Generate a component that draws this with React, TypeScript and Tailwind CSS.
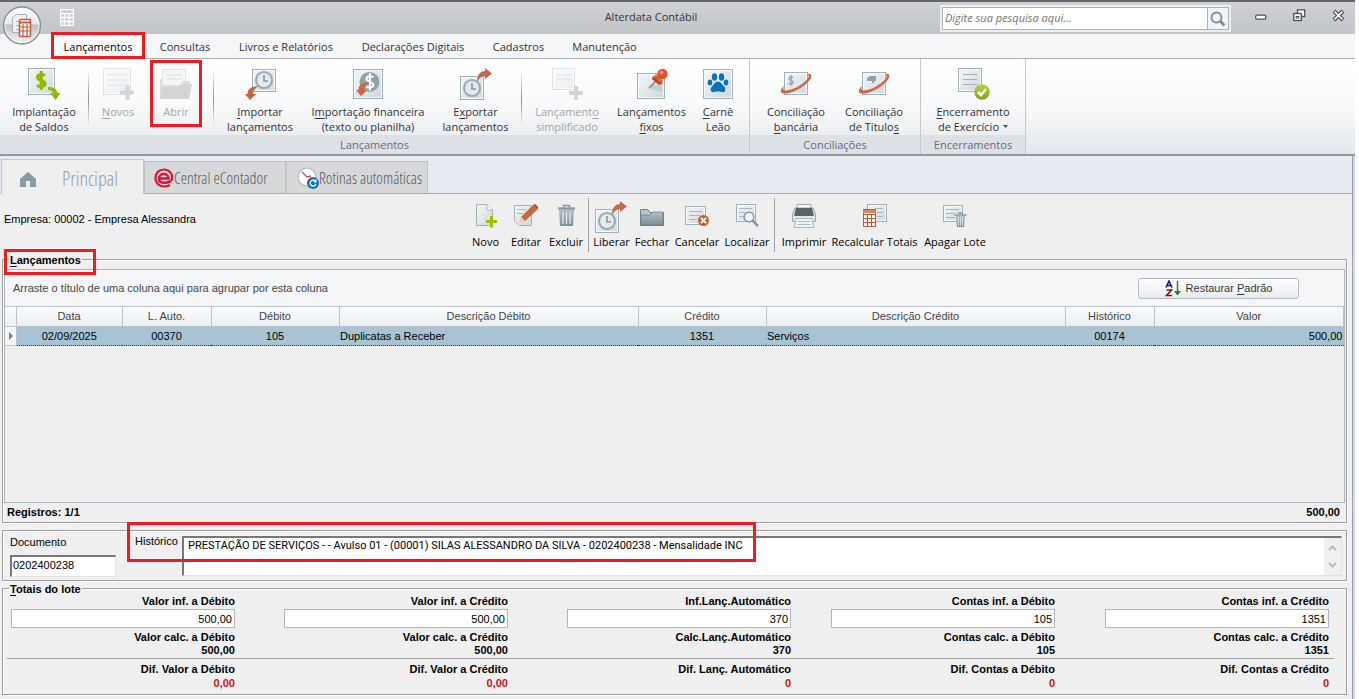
import React from "react";

type IconProps = { children: React.ReactNode; w?: number; h?: number };

function Svg({ children, w = 40, h = 34 }: IconProps) {
  return (
    <svg width={w} height={h} viewBox={`0 0 ${w} ${h}`} fill="none" aria-hidden="true" className="shrink-0">
      {children}
    </svg>
  );
}

function Sheet({ x, y, w, h }: { x: number; y: number; w: number; h: number }) {
  return (
    <g>
      <rect x={x + 0.5} y={y + 0.5} width={w - 1} height={h - 1} fill="url(#sheet)" stroke="#9fb0b9" />
      <rect x={x + 1.5} y={y + 1.5} width={w - 3} height={h - 3} stroke="#f7fafb" />
    </g>
  );
}

function Clock({ cx, cy }: { cx: number; cy: number }) {
  return (
    <g>
      <circle cx={cx} cy={cy} r="8" fill="#e4eaed" stroke="#9aabb4" strokeWidth="2.2" />
      <path d={`M${cx} ${cy - 5}V${cy + 1}H${cx + 4}`} stroke="#8799a2" strokeWidth="1.6" />
    </g>
  );
}

const OutArrow = ({ x, y }: { x: number; y: number }) => (
  <path transform={`translate(${x} ${y})`} d="M0 14C0 7 3 3 8 3V0L15 5.500L8 11V8C5 8 2 10 0 14Z" fill="#c9694a" />
);
const InArrow = ({ x, y }: { x: number; y: number }) => (
  <path transform={`translate(${x} ${y})`} d="M14 0C6 .5 2.500 3 2.500 8H0L5 14L11 8H8C8 5 10 2 14 0Z" fill="#cc6440" />
);
const Ring = () => (
  <path d="M31 7C37 6 37 11 30 17C21 25 7 29 5 25C4 23 6 21 8 19C7 22 7 23 9 23.500C14 24 23 20 29 14.500C33 11 34 8 31 7Z" fill="#cb6646" />
);
const Dollar = ({ x, y, s, c, sw }: { x: number; y: number; s: number; c: string; sw: number }) => (
  <path
    transform={`translate(${x} ${y}) scale(${s})`}
    d="M8.500 4.500C7 3 1.500 2.500 1.500 6C1.500 9.500 8.500 8.500 8.500 12C8.500 15.500 3 15.500 1 13.500M5 0V18"
    stroke={c}
    strokeWidth={sw}
  />
);

function Defs() {
  return (
    <svg width="0" height="0" className="absolute" aria-hidden="true">
      <defs>
        <linearGradient id="sheet" x1="0" y1="0" x2="1" y2="1">
          <stop offset="0" stopColor="#f4f7f8" />
          <stop offset="1" stopColor="#cfd8dc" />
        </linearGradient>
        <linearGradient id="steel" x1="0" y1="0" x2="0" y2="1">
          <stop offset="0" stopColor="#b4c2c8" />
          <stop offset="1" stopColor="#7b8e96" />
        </linearGradient>
        <linearGradient id="orb" x1="0" y1="0" x2="0" y2="1">
          <stop offset="0" stopColor="#ffffff" />
          <stop offset=".45" stopColor="#e6e7e9" />
          <stop offset=".5" stopColor="#bfc1c4" />
          <stop offset="1" stopColor="#f4f5f6" />
        </linearGradient>
        <linearGradient id="lime" x1="0" y1="0" x2="0" y2="1">
          <stop offset="0" stopColor="#b9d23c" />
          <stop offset="1" stopColor="#82a012" />
        </linearGradient>
      </defs>
    </svg>
  );
}

/* Ribbon drawings */
const IcBalance = (
  <Svg>
    <Sheet x={4} y={1} w={27} h={27} />
    <Dollar x={12} y={4} s={1.05} c="#94b800" sw={3} />
    <path d="M24 20C30 20 33 22 33.500 26H36.500L31.500 33L26 26H29C28.500 24 27 23 24 23.500Z" fill="#94b800" />
  </Svg>
);
const IcNew = (
  <Svg>
    <g opacity=".3">
      <Sheet x={5} y={1} w={28} h={27} />
      <path d="M9 8H29M9 13H29M9 18H29" stroke="#9fb0b9" />
    </g>
    <path d="M29.500 18.500V33M22 25.500H36" stroke="#d3d5d7" strokeWidth="4" />
  </Svg>
);
const IcOpen = (
  <Svg>
    <path d="M6.500 2.500H29.500V22H6.500Z" fill="#f5f5f5" stroke="#e2e3e4" />
    <path d="M10 8H26M10 12H26" stroke="#dcdedf" />
    <path d="M4 32V12H7V18H24L27 14H34V18Z" fill="#dcdddd" />
    <path d="M4 32L7 20H23L26 17H36L33 32Z" fill="#d2d4d5" />
  </Svg>
);
const IcImport = (
  <Svg>
    <Sheet x={12} y={2} w={24} h={23} />
    <Clock cx={24} cy={13} />
    <InArrow x={5} y={19} />
  </Svg>
);
const IcImportFin = (
  <Svg>
    <Sheet x={5} y={2} w={30} h={30} />
    <circle cx="21.500" cy="15" r="10" fill="#8fa1ab" />
    <Dollar x={17} y={6} s={0.98} c="#fff" sw={2} />
    <InArrow x={8} y={15} />
  </Svg>
);
const IcExport = (
  <Svg>
    <Sheet x={4} y={9} w={24} h={24} />
    <Clock cx={16} cy={21} />
    <OutArrow x={21} y={1} />
  </Svg>
);
const IcSimple = (
  <Svg>
    <g opacity=".35">
      <Sheet x={5} y={1} w={23} h={22} />
      <path d="M9 8H24M9 12H24" stroke="#9fb0b9" />
    </g>
    <path d="M29 19V33M22 26H36" stroke="#d0d2d4" strokeWidth="4" />
  </Svg>
);
const IcPin = (
  <Svg>
    <Sheet x={5} y={6} w={28} h={26} />
    <path d="M21 18L30 17V25L18 22Z" fill="#c3ccd1" />
    <path d="M17 21L24 14" stroke="#8b9aa2" strokeWidth="2" />
    <path d="M21 9L31 16L27 18L20 12Z" fill="#b8411d" />
    <path d="M24 7L31 14L28 16L22 10Z" fill="#dc6238" />
    <circle cx="30.500" cy="7" r="5.200" fill="#d9532a" />
    <circle cx="29.500" cy="5.500" r="2" fill="#ee8c68" />
  </Svg>
);
const IcPaw = (
  <Svg>
    <Sheet x={5} y={2} w={30} h={30} />
    <g fill="#0a72b0">
      <ellipse cx="16.500" cy="10" rx="2.700" ry="3.700" />
      <ellipse cx="23.500" cy="10" rx="2.700" ry="3.700" />
      <ellipse cx="12" cy="15.500" rx="2.300" ry="3" />
      <ellipse cx="28" cy="15.500" rx="2.300" ry="3" />
      <path d="M20 14.500C23 14.500 24.500 18 26.500 20C28.500 22.500 27 26 23.500 25C21 24.400 19 24.400 16.500 25C13 26 11.500 22.500 13.500 20C15.500 18 17 14.500 20 14.500Z" />
    </g>
  </Svg>
);
const IcBank = (
  <Svg>
    <Sheet x={8} y={5} w={24} h={23} />
    <Dollar x={12} y={8} s={0.6} c="#9aa9b1" sw={2.6} />
    <Ring />
  </Svg>
);
const IcTitle = (
  <Svg>
    <Sheet x={8} y={5} w={24} h={23} />
    <path d="M13 11L16 9H22V14H20V16H18V14H13Z" fill="#8ea0aa" />
    <Ring />
  </Svg>
);
const IcClose = (
  <Svg>
    <Sheet x={5} y={1} w={24} h={24} />
    <path d="M10 7.500H24M10 12.500H24M10 17.500H24" stroke="#a3b2ba" />
    <circle cx="29" cy="25" r="7.700" fill="url(#lime)" />
    <path d="M25 25L28 28L33 22" stroke="#fff" strokeWidth="2.600" />
  </Svg>
);

/* Toolbar drawings */
const TbNew = (
  <Svg w={34} h={32}>
    <path d="M7.500 6.500H18L23.500 12V27.500H7.500Z" fill="url(#sheet)" stroke="#a3b2ba" />
    <path d="M18 6.500V12H23.500" fill="#fff" stroke="#a3b2ba" />
    <path d="M22.500 18V29.500M17 23.500H28" stroke="#9cbf00" strokeWidth="3" />
  </Svg>
);
const TbEdit = (
  <Svg w={34} h={32}>
    <path d="M5.500 7.500H22.500V27.500H10L5.500 23Z" fill="url(#sheet)" stroke="#a3b2ba" />
    <path d="M8 11.500H17M8 15.500H14" stroke="#a9b7be" />
    <path d="M12 19L24 7L29 11L16 23Z" fill="#c9663f" />
    <path d="M12 19L16 23L10 25Z" fill="#e8c9a8" />
    <path d="M24 7L26 6L29 9L29 11Z" fill="#8b4a33" />
  </Svg>
);
const TbTrash = (
  <Svg w={34} h={32}>
    <path d="M10 12H25L24 28H11Z" fill="url(#steel)" />
    <path d="M14 14V26M17.500 14V26M21 14V26" stroke="#e6ebed" strokeWidth="1.200" />
    <path d="M9 10.500H26" stroke="#8799a1" strokeWidth="2.400" />
    <path d="M14.500 9.500V7.500H20.500V9.500" stroke="#8799a1" strokeWidth="1.500" />
  </Svg>
);
const TbRelease = (
  <Svg w={34} h={36}>
    <Sheet x={0} y={11} w={24} h={24} />
    <Clock cx={12} cy={23} />
    <OutArrow x={17} y={3} />
  </Svg>
);
const TbFolder = (
  <Svg w={34} h={32}>
    <path d="M5.500 27.500V11.500H13L15 14.500H28.500V27.500Z" fill="#b8c4c9" stroke="#6f8088" />
    <path d="M6 27V17H15L18 14H28V27Z" fill="url(#steel)" stroke="#6f8088" strokeWidth=".8" />
  </Svg>
);
const TbCancel = (
  <Svg w={34} h={32}>
    <Sheet x={5} y={8} w={21} h={19} />
    <path d="M9 13.500H22M9 17.500H20M9 21.500H17" stroke="#a9b7be" />
    <circle cx="23.500" cy="22.500" r="5.500" fill="#cf5c33" />
    <path d="M21 20L26 25M26 20L21 25" stroke="#fff" strokeWidth="1.800" />
  </Svg>
);
const TbFind = (
  <Svg w={34} h={32}>
    <Sheet x={6} y={6} w={20} h={18} />
    <path d="M9 10.500H22M9 14.500H15M9 18.500H14" stroke="#a9b7be" />
    <circle cx="19" cy="19" r="4.800" fill="#f1f5f6" stroke="#8799a1" strokeWidth="1.600" />
    <path d="M22.500 22.500L28 28" stroke="#7c8e96" strokeWidth="2.400" />
  </Svg>
);
const TbPrint = (
  <Svg w={34} h={32}>
    <path d="M10 6.500H24V12H10Z" fill="#fbfcfc" stroke="#97a7ae" />
    <path d="M8 10H26L28.500 16V23.500H5.500V16Z" fill="#dfe5e7" stroke="#97a7ae" />
    <path d="M9 10H25L27 18H7Z" fill="#5c6468" />
    <path d="M9.500 20.500H24.500L27 29.500H7Z" fill="#eef4f5" stroke="#a3b8bd" />
    <path d="M11 23.500H23M10 26.500H24" stroke="#a9bcc1" />
  </Svg>
);
const TbCalc = (
  <Svg w={34} h={32}>
    <Sheet x={9} y={6} w={20} h={18} />
    <path d="M17 10.500H25M19 14.500H25M19 18.500H25" stroke="#a9b7be" />
    <rect x="5.500" y="11.500" width="12" height="17" fill="#fff" stroke="#c05a37" />
    <path d="M5 12H18V15H5Z" fill="#d58465" />
    <path d="M6 16.500H17M6 20.500H17M6 24.500H17M9.500 16V28M13.500 16V28" stroke="#c05a37" />
  </Svg>
);
const TbErase = (
  <Svg w={34} h={32}>
    <Sheet x={5} y={7} w={20} h={17} />
    <path d="M8 11.500H21M8 15.500H17M8 19.500H17" stroke="#a9b7be" />
    <path d="M18 18H27L26 29H19Z" fill="url(#steel)" />
    <path d="M20.500 19V28M22.500 19V28M24.500 19V28" stroke="#e6ebed" strokeWidth=".8" />
    <path d="M16.500 17H28.500M20 15H25" stroke="#8799a1" strokeWidth="1.600" />
  </Svg>
);

function Mark({ className }: { className: string }) {
  return <span aria-hidden="true" className={`pointer-events-none absolute z-20 border-3 border-[#ed1c24] ${className}`} />;
}

const U = ({ children }: { children: React.ReactNode }) => <span className="underline underline-offset-2">{children}</span>;

function Big({ icon, w, l1, l2, off, children }: { icon: React.ReactNode; w: string; l1: React.ReactNode; l2?: React.ReactNode; off?: boolean; children?: React.ReactNode }) {
  return (
    <button type="button" className={`relative flex shrink-0 flex-col items-center pt-2 text-[11px] leading-[15px] whitespace-nowrap ${w} ${off ? "text-[#a2a4a7]" : "text-[#2f3338]"}`}>
      {icon}
      <span className="mt-[3px]">{l1}</span>
      {l2 && <span>{l2}</span>}
      {children}
    </button>
  );
}

const Sep = () => <span className="mt-3 h-14 w-px shrink-0 bg-linear-to-b from-[#f4f4f5] via-[#8f9296] to-[#f4f4f5]" />;

function Group({ w, title, children }: { w: string; title: string; children: React.ReactNode }) {
  return (
    <section className={`flex shrink-0 flex-col border-r border-[#c4c8cc] ${w}`}>
      <div className="flex flex-1">{children}</div>
      <h2 className="h-[19px] bg-[#dde1e5] text-center text-[11px] leading-5 text-[#666b7d]">{title}</h2>
    </section>
  );
}

function Tool({ icon, w, label }: { icon: React.ReactNode; w: string; label: string }) {
  return (
    <button type="button" className={`flex h-[52px] shrink-0 flex-col items-center justify-between text-[11px] leading-4 whitespace-nowrap text-black ${w}`}>
      {icon}
      <span>{label}</span>
    </button>
  );
}

const ToolSep = () => <span className="mx-[2px] h-[54px] w-px shrink-0 bg-[#a0a0a0]" />;

const menu = [
  { label: "Consultas", w: "w-20" },
  { label: "Livros e Relatórios", w: "w-[122px]" },
  { label: "Declarações Digitais", w: "w-[132px]" },
  { label: "Cadastros", w: "w-[79px]" },
  { label: "Manutenção", w: "w-[93px]" },
];

const columns = [
  { name: "Data", value: "02/09/2025", align: "text-center", w: "w-[106px]" },
  { name: "L. Auto.", value: "00370", align: "text-center", w: "w-[89px]" },
  { name: "Débito", value: "105", align: "text-center", w: "w-[128px]" },
  { name: "Descrição Débito", value: "Duplicatas a Receber", align: "text-left", w: "w-[299px]" },
  { name: "Crédito", value: "1351", align: "text-center", w: "w-[128px]" },
  { name: "Descrição Crédito", value: "Serviços", align: "text-left", w: "w-[299px]" },
  { name: "Histórico", value: "00174", align: "text-center", w: "w-[89px]" },
  { name: "Valor", value: "500,00", align: "text-right", w: "w-auto" },
];

const totals = [
  { id: "t1", inf: "Valor inf. a Débito", calc: "Valor calc. a Débito", dif: "Dif. Valor a Débito", v: "500,00", d: "0,00" },
  { id: "t2", inf: "Valor inf. a Crédito", calc: "Valor calc. a Crédito", dif: "Dif. Valor a Crédito", v: "500,00", d: "0,00" },
  { id: "t3", inf: "Inf.Lanç.Automático", calc: "Calc.Lanç.Automático", dif: "Dif. Lanç. Automático", v: "370", d: "0" },
  { id: "t4", inf: "Contas inf. a Débito", calc: "Contas calc. a Débito", dif: "Dif. Contas a Débito", v: "105", d: "0" },
  { id: "t5", inf: "Contas inf. a Crédito", calc: "Contas calc. a Crédito", dif: "Dif. Contas a Crédito", v: "1351", d: "0" },
];

const grid = "grid grid-cols-[273fr_283fr_264fr_274fr_224px]";
const box = "relative border border-[#a0a0a0] shadow-[1px_1px_0_#fff,inset_1px_1px_0_#fff]";

function TitleBar() {
  return (
    <header className="flex h-[34px] items-start border-t-2 border-[#63666d] bg-linear-to-b from-[#cfd1d5] to-[#c2c5c8]">
      <button type="button" aria-label="Calculadora" className="mt-[7px] ml-[60px]">
        <Svg w={14} h={17}>
          <path d="M.5.5H13.500V16.500H.5ZM.5 4.500H13.500M.5 8.500H13.500M.5 12.500H13.500M4.500 4V16M9 4V16" stroke="#fff" strokeWidth="1.300" />
        </Svg>
      </button>
      <h1 className="flex-1 pl-72 text-center text-[11px] leading-[30px] text-[#33363a]">Alterdata Contábil</h1>
      <div className="mt-[3px] flex h-[27px] w-[291px] border-2 border-[#eceef0]">
        <input aria-label="Pesquisa" placeholder="Digite sua pesquisa aqui..." className="min-w-0 flex-1 border border-[#aab2b9] bg-white px-[2px] pb-px text-[11px] italic outline-none placeholder:text-[#747474]" />
        <button type="button" aria-label="Pesquisar" className="flex w-[21px] items-center justify-center border border-l-0 border-[#aab2b9] bg-[#f1f4f7]">
          <Svg w={16} h={16}>
            <circle cx="6.500" cy="6.500" r="5" stroke="#7f929c" strokeWidth="2" />
            <path d="M10 10L14.500 14.500" stroke="#7f929c" strokeWidth="3" />
          </Svg>
        </button>
      </div>
      <div className="flex w-[124px] items-center gap-[26px] pt-[6px] pl-6">
        <button type="button" aria-label="Minimizar"><Svg w={12} h={14}><rect x=".7" y="7.200" width="10" height="4" rx="1" fill="#fff" stroke="#4d4f52" strokeWidth="1.200" /></Svg></button>
        <button type="button" aria-label="Restaurar"><Svg w={13} h={14}><path d="M4.500 1.800H11.700V8.500H4.500Z" fill="#fff" stroke="#4d4f52" strokeWidth="1.300" /><rect x=".8" y="5.500" width="7.500" height="7" fill="#fff" stroke="#4d4f52" strokeWidth="1.300" /><path d="M3 8.500H6V10H3Z" stroke="#4d4f52" /></Svg></button>
        <button type="button" aria-label="Fechar"><Svg w={13} h={14}><path d="M2 3L11 12M11 3L2 12" stroke="#4d4f52" strokeWidth="4" /><path d="M2.600 3.600L10.400 11.400M10.400 3.600L2.600 11.400" stroke="#fff" strokeWidth="1.600" /></Svg></button>
      </div>
    </header>
  );
}

export default function App() {
  return (
    <div className="relative mr-1 bg-[#d6dbe3] font-['Open_Sans','Noto_Sans',sans-serif]">
      <Defs />
      <TitleBar />
      <button type="button" aria-label="Menu do aplicativo" className="absolute top-[6px] left-[2px] z-10">
        <Svg w={40} h={40}>
          <circle cx="20" cy="19.500" r="18.500" fill="url(#orb)" stroke="#8d9094" strokeWidth="1.500" />
          <circle cx="20" cy="19.500" r="17" stroke="#fff" opacity=".7" />
          <path d="M14 8.500H24.500V26.500H10.500V12Z" fill="#eef1f2" stroke="#a5b3ba" />
          <path d="M14 15.500H20M14 19.500H18M14 23.500H18" stroke="#a5b3ba" />
          <rect x="17.500" y="13.500" width="11" height="17" rx="1" fill="#fff" stroke="#c25a38" strokeWidth="1.500" />
          <path d="M17.500 16.500H28.500" stroke="#c25a38" strokeWidth="2" />
          <path d="M18 21H28M18 25H28M21 18V30M25 18V30" stroke="#c25a38" strokeWidth="1.200" />
        </Svg>
      </button>

      <nav className="flex h-[25px] border-b border-[#a9acb0] bg-[#f5f6f8] pl-[51px] text-[11px] leading-[26px] text-[#2f3338]">
        <a href="#lancamentos" className="relative w-[94px] bg-white text-center text-black">
          Lançamentos
          <Mark className="inset-x-0 top-[-2px] bottom-[-1px]" />
        </a>
        {menu.map((m) => (
          <a key={m.label} href="#menu" className={`text-center ${m.w}`}>{m.label}</a>
        ))}
      </nav>

      <div className="flex h-[97px] border-b-2 border-[#94979b] bg-linear-to-b from-white via-[#f8f9fa] to-[#e3e7eb]">
        <Group w="w-[750px]" title="Lançamentos">
          <Big icon={IcBalance} w="w-[88px]" l1="Implantação" l2="de Saldos" />
          <Sep />
          <Big off icon={IcNew} w="w-[58px]" l1={<><U>N</U>ovos</>} />
          <Big off icon={IcOpen} w="w-[58px]" l1="Abrir">
            <Mark className="inset-x-[3px] top-px h-[67px]" />
          </Big>
          <span className="w-2" />
          <Sep />
          <Big icon={IcImport} w="w-[92px]" l1={<><U>I</U>mportar</>} l2="lançamentos" />
          <Big icon={IcImportFin} w="w-[124px]" l1={<>I<U>m</U>portação financeira</>} l2="(texto ou planilha)" />
          <Big icon={IcExport} w="w-[91px]" l1={<>E<U>x</U>portar</>} l2="lançamentos" />
          <Sep />
          <Big off icon={IcSimple} w="w-[90px]" l1={<>Lançament<U>o</U></>} l2="simplificado" />
          <Big icon={IcPin} w="w-[79px]" l1="Lançamentos" l2={<><U>f</U>ixos</>} />
          <Big icon={IcPaw} w="w-[54px]" l1={<><U>C</U>arnê</>} l2="Leão" />
        </Group>
        <Group w="w-[171px]" title="Conciliações">
          <span className="w-[7px]" />
          <Big icon={IcBank} w="w-[78px]" l1="Conciliação" l2={<><U>b</U>ancária</>} />
          <Big icon={IcTitle} w="w-[78px]" l1="Conciliação" l2={<>de Título<U>s</U></>} />
        </Group>
        <Group w="w-[105px]" title="Encerramentos">
          <Big icon={IcClose} w="w-[104px]" l1={<><U>E</U>ncerramento</>} l2={<span className="flex items-center gap-1">de Exercício<Svg w={5} h={3}><path d="M0 0H5L2.500 3Z" fill="#4a4d52" /></Svg></span>} />
        </Group>
      </div>

      <div className="mr-[2px] border-r border-[#9aa0b2] bg-[#efefef]">
        <nav className="flex h-[38px] items-end border-b border-[#a9b0bb] bg-[#e7eaf0] pl-[1px] font-['Open_Sans_Condensed_Light','Open_Sans_Condensed','Liberation_Sans_Narrow',sans-serif] font-light whitespace-nowrap">
          <a href="#principal" className="-mb-px flex h-[35px] w-[143px] items-center border border-b-0 border-[#c2c7cd] bg-[#efefef] pt-1 pl-4 text-xl text-[#8fa0a9]">
            <Svg w={20} h={20}><path d="M2 10L10 3L18 10V18H12V12H8V18H2Z" fill="#8799a2" /></Svg>
            <span className="ml-6">Principal</span>
          </a>
          <a href="#econtador" className="flex h-8 w-[142px] items-center border border-b-0 border-[#c0c3c7] bg-[#d7d8d9] pl-[9px] text-base text-[#55595d]">
            <Svg w={20} h={20}>
              <path d="M5 10.500H14.500C14.500 4.500 5 4.500 5 10.500C5 16 12.500 15.500 17 13" stroke="#d4183a" strokeWidth="2.600" />
              <path d="M17.500 13C20 6 15 1.500 10 1.500C5 1.500 1.500 5 1.500 10C1.500 15.500 6 18.500 10 18.500C12.500 18.500 14.500 18 16 17" stroke="#d4183a" strokeWidth="2.200" />
            </Svg>
            <span>Central eContador</span>
          </a>
          <a href="#rotinas" className="flex h-8 w-[142px] items-center border border-b-0 border-[#c0c3c7] bg-[#d7d8d9] pl-[10px] text-base text-[#55595d]">
            <Svg w={22} h={24}>
              <circle cx="10" cy="11" r="9" fill="#fff" stroke="#b5c0c6" strokeWidth="1.500" />
              <path d="M5 6L10 11L14 10" stroke="#c65a35" strokeWidth="1.400" />
              <circle cx="16" cy="17" r="6" fill="#1271b4" />
              <path d="M18.700 15.500A3 3 0 1 0 19 18M19 13.500V16H16.500" stroke="#fff" strokeWidth="1.200" />
            </Svg>
            <span>Rotinas automáticas</span>
          </a>
        </nav>

        <div className="flex h-[65px] pt-1 pl-1">
          <p className="w-[461px] shrink-0 pt-[13px] font-['Liberation_Sans',sans-serif] text-[11px] leading-4 text-black">Empresa: 00002 - Empresa Alessandra</p>
          <Tool icon={TbNew} w="w-[41px]" label="Novo" />
          <Tool icon={TbEdit} w="w-10" label="Editar" />
          <Tool icon={TbTrash} w="w-10" label="Excluir" />
          <ToolSep />
          <Tool icon={TbRelease} w="w-[41px]" label="Liberar" />
          <Tool icon={TbFolder} w="w-10" label="Fechar" />
          <Tool icon={TbCancel} w="w-[50px]" label="Cancelar" />
          <Tool icon={TbFind} w="w-[50px]" label="Localizar" />
          <ToolSep />
          <span className="w-[2px]" />
          <Tool icon={TbPrint} w="w-[50px]" label="Imprimir" />
          <Tool icon={TbCalc} w="w-[91px]" label="Recalcular Totais" />
          <Tool icon={TbErase} w="w-[70px]" label="Apagar Lote" />
        </div>

        <main className="flex flex-col gap-[7px] pr-[5px] pb-1 pl-[2px] font-['Liberation_Sans',sans-serif] text-[11px] text-black">
          <section className={`${box} h-[264px] px-px pt-[9px]`}>
            <h2 className="absolute -top-2 left-[6px] bg-[#efefef] px-px leading-4 font-bold"><U>L</U>ançamentos</h2>
            <Mark className="-top-[11px] left-px h-[26px] w-[92px]" />
            <div className="flex h-[234px] flex-col border border-[#adb5bf]">
              <div className="flex h-9 shrink-0 items-center justify-between bg-[#f5f6f8] pr-[45px] pl-2 text-[#43464a]">
                <span>Arraste o título de uma coluna aqui para agrupar por esta coluna</span>
                <button type="button" className="flex h-[21px] w-[161px] items-center justify-center gap-1 rounded-[3px] border border-[#b4b8c0] bg-linear-to-b from-white to-[#e8ebef] text-[#33363a]">
                  <Svg w={17} h={17}>
                    <path d="M1 7.500L4 1L7 7.500M2.500 5.500H6" stroke="#17177c" strokeWidth="1.600" />
                    <path d="M1.500 10H6.500L1.500 15.500H7" stroke="#7c1515" strokeWidth="1.600" />
                    <path d="M12.500 1V12" stroke="#198a19" strokeWidth="1.400" />
                    <path d="M9 11H16L12.500 15.500Z" fill="#198a19" />
                  </Svg>
                  <span>Restaurar <U>P</U>adrão</span>
                </button>
              </div>
              <table className="w-full table-fixed border-collapse">
                <thead>
                  <tr className="h-5 bg-linear-to-b from-[#fafbfc] to-[#eceff2] text-[#43464a]">
                    <th aria-label="Seleção" className="w-[11px] border-y border-r border-[#bcc3cb]" />
                    {columns.map((c) => (
                      <th key={c.name} className={`border border-[#bcc3cb] p-0 text-center font-normal ${c.w}`}>{c.name}</th>
                    ))}
                  </tr>
                </thead>
                <tbody>
                  <tr className="h-[19px]">
                    <td className="border-r border-b border-[#bcc3cb] bg-[#f3f5f7] p-0">
                      <span className="ml-1 block"><Svg w={5} h={8}><path d="M0 0L4 4L0 8Z" fill="#7d8187" /></Svg></span>
                    </td>
                    {columns.map((c) => (
                      <td key={c.name} className={`border-b border-dotted border-[#333] bg-[#a7c3d4] px-px py-0 whitespace-nowrap ${c.align}`}>{c.value}</td>
                    ))}
                  </tr>
                </tbody>
              </table>
            </div>
            <div className="flex justify-between pr-[5px] pl-[3px] leading-[18px] font-bold">
              <span>Registros: 1/1</span>
              <span>500,00</span>
            </div>
          </section>

          <section className={`${box} flex h-[51px] pr-1`}>
            <div className="flex w-[125px] shrink-0 flex-col pl-[7px]">
              <label htmlFor="doc" className="pt-[5px] leading-3">Documento</label>
              <input id="doc" defaultValue="0202400238" className="mt-[7px] h-[22px] w-[106px] border-t-2 border-r border-b border-l-2 border-t-[#777] border-r-[#e3e3e3] border-b-[#e3e3e3] border-l-[#777] bg-white px-px pb-1 outline-none" />
            </div>
            <label htmlFor="hist" className="w-[54px] shrink-0 pt-1 pl-[7px] leading-3">Histórico</label>
            <div className="mt-[5px] flex h-10 min-w-0 flex-1 border-t-2 border-r border-b border-l-2 border-t-[#777] border-r-[#e3e3e3] border-b-[#e3e3e3] border-l-[#777] bg-white">
              <textarea id="hist" rows={2} className="min-w-0 flex-1 resize-none overflow-hidden px-1 py-0 font-['Roboto',sans-serif] leading-4 outline-none" defaultValue="PRESTAÇÃO DE SERVIÇOS - - Avulso 01 - (00001) SILAS ALESSANDRO DA SILVA - 0202400238 - Mensalidade INC" />
              <div className="flex w-[17px] flex-col items-center justify-between bg-[#f0f0f0] py-[7px]">
                <button type="button" aria-label="Rolar para cima"><Svg w={9} h={6}><path d="M1 5L4.500 1.500L8 5" stroke="#bbb" strokeWidth="2" /></Svg></button>
                <button type="button" aria-label="Rolar para baixo"><Svg w={9} h={6}><path d="M1 1L4.500 4.500L8 1" stroke="#bbb" strokeWidth="2" /></Svg></button>
              </div>
            </div>
            <Mark className="-top-[9px] left-[124px] h-10 w-[629px]" />
          </section>

          <section className={`${box} h-[107px] pt-1`}>
            <h2 className="absolute -top-2 left-[6px] bg-[#efefef] px-px leading-4 font-bold"><U>T</U>otais do lote</h2>
            <div className={`${grid} pr-[17px] pl-2`}>
              {totals.map((t) => (
                <div key={t.id} className="flex w-56 flex-col text-right font-bold">
                  <label htmlFor={t.id} className="leading-4">{t.inf}</label>
                  <input id={t.id} defaultValue={t.v} className="h-[19px] w-56 border border-[#b0b5c0] bg-white pr-[2px] text-right font-normal outline-none" />
                  <span className="pt-[3px] leading-[13px]">{t.calc}</span>
                  <span className="leading-[13px]">{t.v}</span>
                </div>
              ))}
            </div>
            <hr className="mt-px mr-3 ml-1 border-[#a0a0a0]" />
            <div className={`${grid} pt-[3px] pr-[17px] pl-2`}>
              {totals.map((t) => (
                <div key={t.id} className="flex w-56 flex-col text-right leading-[14px] font-bold">
                  <span>{t.dif}</span>
                  <span className="text-[#c4161c]">{t.d}</span>
                </div>
              ))}
            </div>
          </section>
        </main>
      </div>
    </div>
  );
}
